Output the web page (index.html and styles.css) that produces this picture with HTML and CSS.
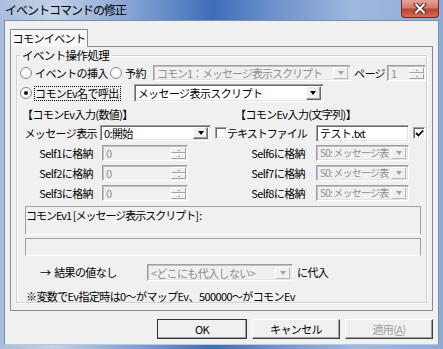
FILE: index.html
```html
<!DOCTYPE html>
<html lang="ja">
<head>
    <meta charset="UTF-8">
    <title>イベントコマンドの修正</title>
    <link rel="stylesheet" href="styles.css">
</head>
<body>
    <div class="window">
        <div class="titlebar">
            <div class="title">イベントコマンドの修正</div>
            <div class="close-btn">
                <svg width="14" height="11" viewBox="0 0 14 11">
                    <path d="M3 1.5 L11 9.5 M11 1.5 L3 9.5" stroke="#4a2a2a" stroke-width="4" stroke-linecap="square"/>
                    <path d="M3 1.5 L11 9.5 M11 1.5 L3 9.5" stroke="#ffffff" stroke-width="2" stroke-linecap="square"/>
                </svg>
            </div>
        </div>

        <div class="client">
            <div class="tabs">
                <div class="tab">コモンイベント</div>
            </div>

            <div class="tab-page">
                <fieldset class="group">
                    <legend>イベント操作処理</legend>

                    <div class="row row-insert">
                        <label class="radio radio-insert"><span class="radio-dot"></span>イベントの挿入</label>
                        <label class="radio radio-reserve"><span class="radio-dot"></span>予約</label>
                        <div class="combo is-disabled combo-reserve">
                            <span class="combo-text tight">コモン1：メッセージ表示スクリプト</span>
                            <span class="drop-btn"></span>
                        </div>
                        <span class="page-label">ページ</span>
                        <div class="spin is-disabled spin-page">
                            <span class="spin-text">1</span>
                            <span class="spin-btns"><span></span><span></span></span>
                        </div>
                    </div>

                    <div class="row row-call">
                        <label class="radio"><span class="radio-dot is-checked"></span><span class="focus">コモンEv名で呼出</span></label>
                        <div class="combo combo-call">
                            <span class="combo-text">メッセージ表示スクリプト</span>
                            <span class="drop-btn"></span>
                        </div>
                    </div>

                    <div class="row row-heads">
                        <span class="head-num">【コモンEv入力(数値)】</span>
                        <span class="head-str">【コモンEv入力(文字列)】</span>
                    </div>

                    <div class="row row-input">
                        <span class="lbl lbl-msg">メッセージ表示</span>
                        <div class="combo combo-msg">
                            <span class="combo-text">0:開始</span>
                            <span class="drop-btn"></span>
                        </div>
                        <span class="check check-msg"></span>
                        <span class="lbl lbl-right tight">テキストファイル</span>
                        <div class="textbox">テスト.txt</div>
                        <span class="check check-file is-checked">
                            <svg width="9" height="9" viewBox="0 0 9 9"><path d="M1 4 L3.5 6.5 L8 1.5" fill="none" stroke="#000" stroke-width="1.8"/></svg>
                        </span>
                    </div>

                    <div class="row row-self">
                        <span class="lbl lbl-self">Self1に格納</span>
                        <div class="spin is-disabled spin-self">
                            <span class="spin-text">0</span>
                            <span class="spin-btns"><span></span><span></span></span>
                        </div>
                        <span class="lbl lbl-right lbl-self-right">Self6に格納</span>
                        <div class="combo is-disabled combo-self">
                            <span class="combo-text narrow">S0: メッセージ表</span>
                            <span class="drop-btn"></span>
                        </div>
                    </div>

                    <div class="row row-self">
                        <span class="lbl lbl-self">Self2に格納</span>
                        <div class="spin is-disabled spin-self">
                            <span class="spin-text">0</span>
                            <span class="spin-btns"><span></span><span></span></span>
                        </div>
                        <span class="lbl lbl-right lbl-self-right">Self7に格納</span>
                        <div class="combo is-disabled combo-self">
                            <span class="combo-text narrow">S0: メッセージ表</span>
                            <span class="drop-btn"></span>
                        </div>
                    </div>

                    <div class="row row-self">
                        <span class="lbl lbl-self">Self3に格納</span>
                        <div class="spin is-disabled spin-self">
                            <span class="spin-text">0</span>
                            <span class="spin-btns"><span></span><span></span></span>
                        </div>
                        <span class="lbl lbl-right lbl-self-right">Self8に格納</span>
                        <div class="combo is-disabled combo-self">
                            <span class="combo-text narrow">S0: メッセージ表</span>
                            <span class="drop-btn"></span>
                        </div>
                    </div>

                    <div class="info-box info-name tight">コモンEv1 [メッセージ表示スクリプト] :</div>
                    <div class="info-box info-empty"></div>

                    <div class="row row-result">
                        <span class="result-label">→&nbsp;&nbsp;結果の値なし</span>
                        <div class="combo is-disabled combo-result">
                            <span class="combo-text">&lt;どこにも代入しない&gt;</span>
                            <span class="drop-btn"></span>
                        </div>
                        <span class="assign-label">に代入</span>
                    </div>

                    <div class="note">※変数でEv指定時は0～がマップEv、500000～がコモンEv</div>
                </fieldset>
            </div>

            <div class="buttons">
                <button class="btn btn-default">OK</button>
                <button class="btn">キャンセル</button>
                <button class="btn" disabled>適用(<u>A</u>)</button>
            </div>
        </div>
    </div>
</body>
</html>
```

FILE: styles.css
```css
* {
    margin: 0;
    padding: 0;
    box-sizing: border-box;
}

body {
    width: 443px;
    height: 349px;
    overflow: hidden;
    font-family: "Noto Sans CJK JP", "Noto Sans", sans-serif;
    font-size: 11px;
    line-height: 13px;
    letter-spacing: -0.6px;
    color: #000;
}

.tight {
    letter-spacing: -1px;
}

.narrow {
    font-size: 10px;
    letter-spacing: -0.8px;
}

/* window frame */
.window {
    width: 443px;
    height: 349px;
    padding: 0 4px 4px;
    display: flex;
    flex-direction: column;
    background: linear-gradient(90deg, #a9bedd 0%, #c2d1e6 12%, #7b9dd0 32%, #3e6db8 48%, #6e92cc 62%, #9fb8de 80%, #8eabd8 100%);
}

.titlebar {
    height: 20px;
    display: flex;
    justify-content: space-between;
    align-items: flex-start;
}

.title {
    padding: 3px 0 0 1px;
    font-size: 12px;
    letter-spacing: -1px;
}

.close-btn {
    width: 38px;
    height: 18px;
    border: 1px solid #6b2b2b;
    border-top: none;
    border-radius: 0 0 4px 4px;
    background: linear-gradient(#e8a59a 0%, #d47a6c 45%, #c2412e 55%, #d86c50 100%);
    display: flex;
    justify-content: center;
    align-items: center;
}

.client {
    flex: 1;
    background: #f0f0f0;
    border: 1px solid #7d8ea8;
    border-bottom-color: #b9c8dc;
}

/* tabs */
.tabs {
    display: flex;
    padding: 8px 0 0 5px;
}

.tab {
    width: 78px;
    height: 18px;
    margin-bottom: -1px;
    position: relative;
    z-index: 1;
    border: 1px solid #898c95;
    border-bottom: none;
    background: #f7f7f7;
    text-align: center;
    line-height: 16px;
}

.tab-page {
    height: 265px;
    margin: 0 5px;
    padding: 2px 5px 0;
    border: 1px solid #898c95;
    background: #f0f0f0;
}

/* group box */
.group {
    height: 254px;
    border: 1px solid #d0d0d0;
    box-shadow: inset 1px 1px 0 #fff, 1px 1px 0 #fff;
}

.group legend {
    margin-left: 3px;
    padding: 0 2px;
    font-size: 11.5px;
    line-height: 13px;
}

.row {
    display: flex;
    align-items: center;
}

/* radios */
.radio {
    display: flex;
    align-items: center;
}

.radio-dot {
    width: 12px;
    height: 12px;
    margin-right: 3px;
    border: 1px solid #8a8a8a;
    border-radius: 50%;
    background: radial-gradient(circle at 40% 40%, #fff 0%, #f4f4f4 60%, #dcdcdc 100%);
    display: flex;
    justify-content: center;
    align-items: center;
}

.radio-dot.is-checked::after {
    content: "";
    width: 4px;
    height: 4px;
    border-radius: 50%;
    background: #111;
}

.focus {
    outline: 1px dotted #000;
    outline-offset: 0;
    padding: 0 1px 0 0;
}

/* combo boxes */
.combo {
    height: 16px;
    display: flex;
    align-items: center;
    justify-content: space-between;
    background: #fff;
    border: 1px solid;
    border-color: #a0a0a0 #fff #fff #a0a0a0;
    box-shadow: inset 1px 1px 0 #696969, inset -1px -1px 0 #e3e3e3;
    padding: 1px 2px 1px 3px;
}

.combo-text {
    white-space: nowrap;
    line-height: 12px;
}

.drop-btn {
    flex: none;
    width: 15px;
    height: 12px;
    margin-left: 1px;
    background: #f0f0f0;
    border: 1px solid;
    border-color: #fff #696969 #696969 #fff;
    box-shadow: inset -1px -1px 0 #a0a0a0;
    display: flex;
    justify-content: center;
    align-items: center;
}

.drop-btn::after {
    content: "";
    border-left: 3.5px solid transparent;
    border-right: 3.5px solid transparent;
    border-top: 4px solid #000;
}

.combo-call .drop-btn {
    height: 14px;
}

.combo.is-disabled {
    background: #f0f0f0;
    color: #8d8d8d;
    box-shadow: inset 1px 1px 0 #c0c0c0, inset -1px -1px 0 #e3e3e3;
}

.combo.is-disabled .drop-btn {
    border-color: #fff #b8b8b8 #b8b8b8 #fff;
    box-shadow: none;
}

.combo.is-disabled .drop-btn::after {
    border-top-color: #a0a0a0;
}

/* spin edits */
.spin {
    height: 16px;
    display: flex;
    align-items: stretch;
    justify-content: space-between;
    border: 1px solid;
    border-color: #a0a0a0 #fff #fff #a0a0a0;
    box-shadow: inset 1px 1px 0 #c0c0c0;
    background: #f0f0f0;
    color: #8d8d8d;
    padding: 1px 1px 1px 3px;
}

.spin-text {
    line-height: 12px;
}

.spin-btns {
    width: 15px;
    display: flex;
    flex-direction: column;
}

.spin-btns span {
    flex: 1;
    border: 1px solid;
    border-color: #fff #a0a0a0 #a0a0a0 #fff;
    display: flex;
    justify-content: center;
    align-items: center;
}

.spin-btns span::after {
    content: "";
    width: 2px;
    height: 1px;
    background: #a0a0a0;
}

/* checkboxes */
.check {
    width: 12px;
    height: 12px;
    border: 1px solid;
    border-color: #a0a0a0 #fff #fff #a0a0a0;
    box-shadow: inset 1px 1px 0 #696969, inset -1px -1px 0 #e3e3e3;
    background: #fff;
    display: flex;
    justify-content: center;
    align-items: center;
}

.textbox {
    width: 93px;
    height: 17px;
    margin-left: 11px;
    padding: 1px 3px;
    background: #fff;
    border: 1px solid;
    border-color: #a0a0a0 #fff #fff #a0a0a0;
    box-shadow: inset 1px 1px 0 #696969, inset -1px -1px 0 #e3e3e3;
    white-space: nowrap;
}

/* row 1 */
.row-insert {
    margin-top: 3px;
    padding-left: 3px;
    height: 16px;
}

.radio-insert {
    width: 90px;
}

.radio-reserve {
    width: 43px;
}

.combo-reserve {
    width: 198px;
}

.page-label {
    width: 31px;
    margin-left: 3px;
}

.spin-page {
    width: 39px;
    margin-left: 2px;
}

/* row 2 */
.row-call {
    margin-top: 3px;
    padding-left: 3px;
    height: 18px;
}

.combo-call {
    width: 190px;
    height: 18px;
    margin-left: 14px;
}

/* headings */
.row-heads {
    margin-top: 5px;
    height: 14px;
    padding-left: 5px;
}

.head-num {
    width: 213px;
}

/* two column area */
.row-input {
    margin-top: 4px;
    height: 16px;
}

.row-self {
    margin-top: 4px;
    height: 16px;
}

.lbl {
    text-align: right;
    white-space: nowrap;
}

.lbl-msg {
    width: 80px;
}

.combo-msg {
    width: 111px;
    margin-left: 3px;
}

.check-msg {
    margin-left: 4px;
}

.lbl-right {
    width: 78px;
}

.check-file {
    margin-left: 4px;
}

.lbl-self {
    width: 76px;
}

.spin-self {
    width: 86px;
    margin-left: 9px;
}

.lbl-self-right {
    margin-left: 39px;
}

.combo-self {
    width: 93px;
    margin-left: 11px;
}

/* info boxes */
.info-box {
    width: 396px;
    margin-left: 8px;
    border: 1px solid;
    border-color: #a0a0a0 #a0a0a0 #fff #a0a0a0;
    white-space: nowrap;
}

.info-name {
    height: 29px;
    margin-top: 5px;
    padding: 2px 0 0 0;
}

.info-empty {
    height: 18px;
    margin-top: 3px;
}

/* result row */
.row-result {
    margin-top: 8px;
    height: 17px;
}

.result-label {
    width: 107px;
    margin-left: 23px;
}

.combo-result {
    width: 146px;
    height: 17px;
}

.assign-label {
    margin-left: 4px;
}

.note {
    margin-top: 9px;
    padding-left: 9px;
    white-space: nowrap;
}

/* dialog buttons */
.buttons {
    display: flex;
    justify-content: flex-end;
    gap: 5px;
    margin-top: 8px;
    padding-right: 5px;
}

.btn {
    width: 88px;
    height: 20px;
    font-family: inherit;
    font-size: 11px;
    letter-spacing: -0.6px;
    background: #f0f0f0;
    border: 1px solid;
    border-color: #fff #404040 #404040 #fff;
    box-shadow: inset -1px -1px 0 #a0a0a0;
    color: #000;
}

.btn-default {
    width: 90px;
    outline: 1px solid #333;
    outline-offset: -1px;
}

.btn:disabled {
    color: #a0a0a0;
}
```
